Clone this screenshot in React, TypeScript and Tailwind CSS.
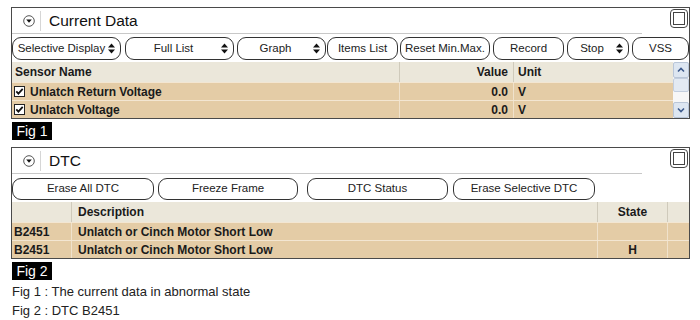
import type { ReactNode } from "react";

const sans = { fontFamily: '"Liberation Sans", Arial, sans-serif' };

const UpDown = () => (
    <svg width="7" height="11" viewBox="0 0 7 11" className="shrink-0">
        <path d="M3.5 0.5 L7 4.6 H0 Z M0 6.4 H7 L3.5 10.5 Z" fill="#111" />
    </svg>
);

const CollapseIcon = () => (
    <svg width="12" height="12" viewBox="0 0 12 12">
        <circle cx="6" cy="6" r="5.3" fill="#fff" stroke="#555" strokeWidth="1" />
        <path d="M3.2 4.6 H8.8 L6 7.8 Z" fill="#111" />
    </svg>
);

const WindowIcon = () => (
    <svg width="18" height="19" viewBox="0 0 18 19">
        <rect x="0.5" y="0.5" width="17" height="18" rx="3.5" fill="#fff" stroke="#444" />
        <rect x="3.5" y="3.5" width="11" height="12" fill="#fff" stroke="#444" />
    </svg>
);

const CheckBox = () => (
    <svg width="11" height="11" viewBox="0 0 11 11" className="shrink-0">
        <rect x="0.5" y="0.5" width="10" height="10" fill="#fff" stroke="#222" />
        <path d="M2.3 5.4 L4.4 7.6 L8.7 2.9" fill="none" stroke="#111" strokeWidth="1.8" />
    </svg>
);

const Chevron = ({ up }: { up?: boolean }) => (
    <svg width="8" height="6" viewBox="0 0 8 6">
        <path d={up ? "M1 4.5 L4 1.5 L7 4.5" : "M1 1.5 L4 4.5 L7 1.5"} fill="none" stroke="#3d5a8c" strokeWidth="1.6" />
    </svg>
);

interface BtnProps {
    children: ReactNode;
    className: string;
    arrow?: "inline" | "right";
}

const Btn = ({ children, className, arrow }: BtnProps) => (
    <div
        className={`flex h-full shrink-0 items-center rounded-[9px] border border-[#333] bg-white text-[11.5px] text-[#222] ${className}`}
    >
        {arrow === "right" ? (
            <>
                <span className="flex-1 text-center">{children}</span>
                <span className="mr-[5px]">
                    <UpDown />
                </span>
            </>
        ) : (
            <span className="flex flex-1 items-center justify-center gap-[3px]">
                {children}
                {arrow === "inline" && <UpDown />}
            </span>
        )}
    </div>
);

const TitleBar = ({ title }: { title: string }) => (
    <div className="flex h-[26px] items-stretch">
        <div className="flex flex-1 items-center border-b border-[#c8c8c8]">
            <div className="ml-[11px] flex items-center">
                <CollapseIcon />
            </div>
            <div className="ml-[5px] h-[20px] w-px bg-[#d6d6d6]" />
            <span className="ml-[8px] text-[15.5px] text-[#111]">{title}</span>
        </div>
        <div className="flex w-[47px] items-start justify-end pr-[1px] pt-[1px]">
            <WindowIcon />
        </div>
    </div>
);

const FigTag = ({ label }: { label: string }) => (
    <div className="flex h-[18px] w-[40px] items-center justify-center bg-black text-[14px] text-white">{label}</div>
);

const headBg = "bg-[#ebe7da]";
const rowBg = "bg-[#e4cca6]";

const CurrentData = () => {
    const rows = ["Unlatch Return Voltage", "Unlatch Voltage"];
    return (
        <div className="flex w-[679px] flex-col border border-[#4a4a4a] bg-white">
            <TitleBar title="Current Data" />
            <div className="mt-[3px] flex h-[23px]">
                <Btn className="w-[109px]" arrow="inline">Selective Display</Btn>
                <Btn className="ml-[4px] w-[109px]" arrow="right">Full List</Btn>
                <Btn className="ml-[3px] w-[89px]" arrow="right">Graph</Btn>
                <Btn className="ml-[1px] w-[71px]">Items List</Btn>
                <Btn className="ml-[2px] w-[90px]">Reset Min.Max.</Btn>
                <Btn className="ml-[3px] w-[71px]">Record</Btn>
                <Btn className="ml-[3px] w-[62px]" arrow="right">Stop</Btn>
                <Btn className="ml-[3px] w-[57px]">VSS</Btn>
            </div>
            <div className="mt-[2px] flex text-[12px] font-bold text-[#1a1a1a]">
                <div className="flex flex-1 flex-col">
                    <div className={`flex h-[20px] items-center ${headBg}`}>
                        <div className="w-[387px] pl-[3px]">Sensor Name</div>
                        <div className="h-full w-px bg-[#cfcabb]" />
                        <div className="w-[113px] pr-[5px] text-right">Value</div>
                        <div className="h-full w-px bg-[#cfcabb]" />
                        <div className="flex-1 pl-[4px]">Unit</div>
                    </div>
                    {rows.map((r) => (
                        <div key={r} className={`flex h-[18px] items-center border-t border-[#f3e6d2] ${rowBg}`}>
                            <div className="flex w-[387px] items-center gap-[5px] pl-[2px]">
                                <CheckBox />
                                <span>{r}</span>
                            </div>
                            <div className="h-full w-px bg-[#f0e2cc]" />
                            <div className="w-[113px] pr-[5px] text-right">0.0</div>
                            <div className="h-full w-px bg-[#f0e2cc]" />
                            <div className="flex-1 pl-[4px]">V</div>
                        </div>
                    ))}
                </div>
                <div className="flex w-[16px] flex-col bg-[#f7f7f7]">
                    <div className="flex h-[16px] items-center justify-center rounded-[2px] border border-[#b9c6d8] bg-[#dde6f1]">
                        <Chevron up />
                    </div>
                    <div className="h-[14px] rounded-[2px] border border-[#c3cede] bg-[#e3eaf3]" />
                    <div className="flex-1" />
                    <div className="flex h-[16px] items-center justify-center rounded-[2px] border border-[#b9c6d8] bg-[#dde6f1]">
                        <Chevron />
                    </div>
                </div>
            </div>
        </div>
    );
};

const Dtc = () => {
    const rows = [
        { code: "B2451", state: "" },
        { code: "B2451", state: "H" },
    ];
    return (
        <div className="flex w-[679px] flex-col border border-[#4a4a4a] bg-white">
            <TitleBar title="DTC" />
            <div className="mt-[4px] flex h-[22px]">
                <Btn className="w-[142px]">Erase All DTC</Btn>
                <Btn className="ml-[4px] w-[140px]">Freeze Frame</Btn>
                <Btn className="ml-[9px] w-[141px]">DTC Status</Btn>
                <Btn className="ml-[5px] w-[142px]">Erase Selective DTC</Btn>
            </div>
            <div className="mt-[2px] flex flex-col text-[12px] font-bold text-[#1a1a1a]">
                <div className={`flex h-[20px] items-center ${headBg}`}>
                    <div className="w-[59px]" />
                    <div className="h-full w-px bg-[#cfcabb]" />
                    <div className="w-[525px] pl-[6px]">Description</div>
                    <div className="h-full w-px bg-[#cfcabb]" />
                    <div className="w-[69px] text-center">State</div>
                    <div className="h-full w-px bg-[#cfcabb]" />
                    <div className="flex-1" />
                </div>
                {rows.map((r, i) => (
                    <div key={i} className={`flex h-[18px] items-center border-t border-[#f3e6d2] ${rowBg}`}>
                        <div className="w-[59px] pl-[2px]">{r.code}</div>
                        <div className="h-full w-px bg-[#f0e2cc]" />
                        <div className="w-[525px] pl-[6px]">Unlatch or Cinch Motor Short Low</div>
                        <div className="h-full w-px bg-[#f0e2cc]" />
                        <div className="w-[69px] text-center">{r.state}</div>
                        <div className="h-full w-px bg-[#f0e2cc]" />
                        <div className="flex-1" />
                    </div>
                ))}
            </div>
        </div>
    );
};

export default function App() {
    return (
        <div className="h-[320px] w-[700px] overflow-hidden bg-white pl-[11px] pt-[7px]" style={sans}>
            <CurrentData />
            <div className="mt-[3px] pl-[1px]">
                <FigTag label="Fig 1" />
            </div>
            <div className="mt-[7px]">
                <Dtc />
            </div>
            <div className="mt-[3px] pl-[1px]">
                <FigTag label="Fig 2" />
            </div>
            <div className="mt-[2px] pl-[1px] text-[13px] leading-[19px] text-[#222]">
                <div>Fig 1 : The current data in abnormal state</div>
                <div>Fig 2 : DTC B2451</div>
            </div>
        </div>
    );
}
